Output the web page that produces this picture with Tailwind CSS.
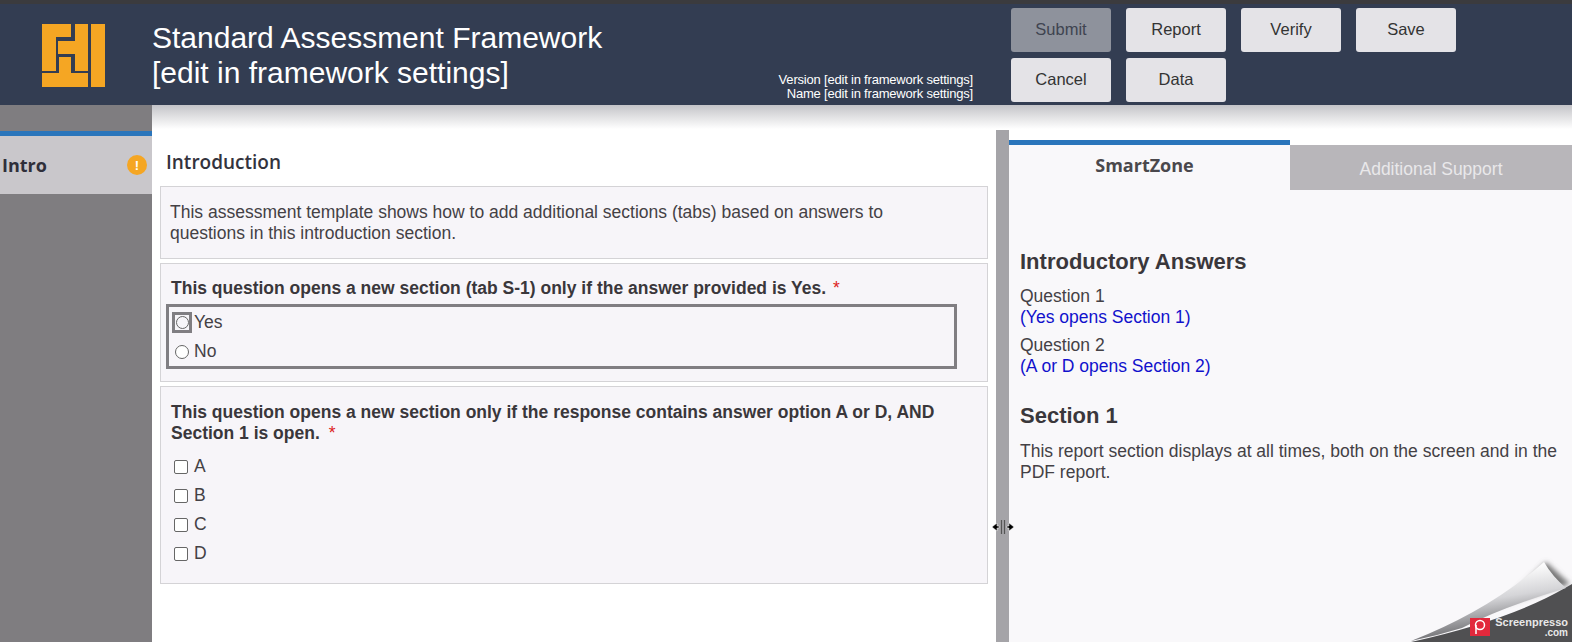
<!DOCTYPE html>
<html lang="en">
  <head>
    <meta charset="UTF-8" />
    <title>Standard Assessment Framework</title>
    <script src="https://cdn.jsdelivr.net/npm/@tailwindcss/browser@4"></script>
  </head>
  <body class="relative w-[1572px] h-[642px] overflow-hidden bg-white font-['Liberation_Sans',Arial,sans-serif] text-[#444145]">
    <!-- header -->
    <header class="flex h-[105px] bg-[#333d52] border-t-4 border-[#3b3b3e]">
      <svg class="ml-[42px] mt-[20px] w-[63px] h-[63px] shrink-0" viewBox="0 0 63 63" fill="#f5a623">
        <path d="M49 0h14v63H49z" />
        <path d="M0 49h46v14H0z" />
        <path d="M17 33h12v16H17z" />
        <path d="M0 0h29v13H14v34H0z" />
        <path d="M33 0h13v47H33V30H16V17h17z" />
      </svg>
      <div class="ml-[47px] mt-[16px] w-[620px] text-[30px] leading-[35px] text-white">
        Standard Assessment Framework<br />[edit in framework settings]
      </div>
      <div class="w-[201px] pt-[69px] text-right text-[13px] leading-[14px] text-white tracking-[-0.2px]">
        <div>Version [edit in framework settings]</div>
        <div>Name [edit in framework settings]</div>
      </div>
      <div class="ml-[38px] mt-[4px] grid grid-cols-[repeat(4,100px)] auto-rows-[44px] gap-x-[15px] gap-y-[6px] text-[16.5px]">
        <button class="rounded-[3px] bg-[#8e929c] pb-[2px] text-[#3f4450]">Submit</button>
        <button class="rounded-[3px] bg-[#e4e3e7] pb-[2px] text-[#333]">Report</button>
        <button class="rounded-[3px] bg-[#e4e3e7] pb-[2px] text-[#333]">Verify</button>
        <button class="rounded-[3px] bg-[#e4e3e7] pb-[2px] text-[#333]">Save</button>
        <button class="rounded-[3px] bg-[#e4e3e7] pb-[2px] text-[#333]">Cancel</button>
        <button class="rounded-[3px] bg-[#e4e3e7] pb-[2px] text-[#333]">Data</button>
      </div>
    </header>

    <div class="flex h-[537px]">
      <!-- left tabs -->
      <aside class="w-[152px] shrink-0 bg-[#7f7d80] pt-[26px]">
        <div class="flex items-center justify-between h-[63px] border-t-[5px] border-[#2a75bb] bg-[#c9c7cb] pl-[2px] pr-[5px]">
          <span class="font-['Open_Sans',sans-serif] font-bold text-[18px] text-[#2f2f3a]">Intro</span>
          <span class="flex items-center justify-center w-[20px] h-[20px] rounded-full bg-[#f5a623] text-white text-[13px] font-bold leading-none">!</span>
        </div>
      </aside>

      <!-- questions -->
      <main class="w-[844px] shrink-0 px-[8px]">
        <h2 class="mt-[45px] ml-[6px] h-[36px] font-['Open_Sans',sans-serif] font-semibold text-[19px] leading-[24px] text-[#33333d]">Introduction</h2>
        <section class="h-[73px] border border-[#d4d3d6] bg-[#f7f5f9] pl-[9px] pt-[15px] text-[17.5px] leading-[21px]">
          This assessment template shows how to add additional sections (tabs) based on answers to<br />questions in this introduction section.
        </section>
        <section class="mt-[4px] h-[119px] border border-[#d4d3d6] bg-[#f7f5f9] pl-[5px] pt-[14px]">
          <p class="pl-[5px] h-[26px] text-[17.5px] leading-[21px] font-bold text-[#3a373b]">This question opens a new section (tab S-1) only if the answer provided is Yes. <span class="ml-[2px] font-normal text-[#d22]">*</span></p>
          <div class="w-[791px] h-[65px] border-[3px] border-[#807e82] pl-[3px] text-[17.5px]">
            <label class="flex items-center h-[29px] mt-[1px]">
              <span class="flex items-center justify-center w-[20px] h-[21px] border-[3px] border-[#807e82] mr-[2px]"><span class="w-[13px] h-[13px] rounded-full border border-[#666] bg-[#f7f5f9]"></span></span>Yes
            </label>
            <label class="flex items-center h-[29px]">
              <span class="flex items-center justify-center w-[20px] mr-[2px]"><span class="w-[14px] h-[14px] rounded-full border border-[#666] bg-white"></span></span>No
            </label>
          </div>
        </section>
        <section class="mt-[4px] h-[198px] border border-[#d4d3d6] bg-[#f7f5f9] pl-[10px] pt-[15px]">
          <p class="h-[50px] text-[17.5px] leading-[21px] font-bold text-[#3a373b]">This question opens a new section only if the response contains answer option A or D, AND<br />Section 1 is open. <span class="ml-[4px] font-normal text-[#d22]">*</span></p>
          <div class="flex flex-col text-[17.5px]">
            <label class="flex items-center h-[29px] pl-[3px]"><span class="w-[14px] h-[14px] rounded-[2px] border border-[#666] bg-white mr-[6px]"></span>A</label>
            <label class="flex items-center h-[29px] pl-[3px]"><span class="w-[14px] h-[14px] rounded-[2px] border border-[#666] bg-white mr-[6px]"></span>B</label>
            <label class="flex items-center h-[29px] pl-[3px]"><span class="w-[14px] h-[14px] rounded-[2px] border border-[#666] bg-white mr-[6px]"></span>C</label>
            <label class="flex items-center h-[29px] pl-[3px]"><span class="w-[14px] h-[14px] rounded-[2px] border border-[#666] bg-white mr-[6px]"></span>D</label>
          </div>
        </section>
      </main>

      <!-- splitter -->
      <div class="w-[13px] shrink-0 mt-[25px] bg-[#a5a4a8]"></div>

      <!-- smartzone -->
      <div class="relative flex-1">
        <div class="flex pt-[35px] h-[85px] text-center">
          <div class="w-[281px] border-t-[5px] border-[#2a75bb] bg-[#f9f8fa] pt-[7px] pr-[10px] font-['Open_Sans',sans-serif] font-bold text-[18px] text-[#4a484c]">SmartZone</div>
          <div class="flex-1 mt-[5px] bg-[#b8b6ba] pt-[11px] text-[17.5px] text-[#e9e8ea]">Additional Support</div>
        </div>
        <div class="h-[452px] bg-[#f9f8fa] pl-[11px] pr-[8px] text-[17.5px] leading-[21px]">
          <h3 class="pt-[59px] text-[22px] leading-[26px] font-bold text-[#3a373b]">Introductory Answers</h3>
          <p class="mt-[11px]">Question 1<br /><span class="text-[#1111cc]">(Yes opens Section 1)</span></p>
          <p class="mt-[7px]">Question 2<br /><span class="text-[#1111cc]">(A or D opens Section 2)</span></p>
          <h3 class="mt-[26px] text-[22px] leading-[26px] font-bold text-[#3a373b]">Section 1</h3>
          <p class="mt-[12px]">This report section displays at all times, both on the screen and in the PDF report.</p>
        </div>
      </div>
    </div>

    <!-- shadow cast by the header -->
    <div class="absolute left-[152px] right-0 top-[105px] h-[24px] bg-gradient-to-b from-[#c4c4c8] to-white/0"></div>

    <!-- resize cursor over the splitter -->
    <svg class="absolute left-[991px] top-[519px] w-[24px] h-[16px]" viewBox="0 0 24 16" fill="none">
      <path d="M1 8l5-4v3h2v2H6v3z M23 8l-5-4v3h-2v2h2v3z" fill="#000" stroke="#fff" stroke-width=".5" />
      <path d="M10.5 1v14M13.5 1v14" stroke="#555" stroke-width="1.2" />
    </svg>

    <!-- page curl watermark -->
    <svg class="absolute right-0 bottom-0 w-[172px] h-[102px]" viewBox="0 0 172 102">
      <defs>
        <linearGradient id="flap" x1="0.55" y1="0.1" x2="0.75" y2="0.75">
          <stop offset="0" stop-color="#ffffff" />
          <stop offset="0.5" stop-color="#d5d5d8" />
          <stop offset="1" stop-color="#7b7b7e" />
        </linearGradient>
        <filter id="blur"><feGaussianBlur stdDeviation="2.5" /></filter>
      </defs>
      <path d="M146 22L170 44 100 66z" fill="#777" filter="url(#blur)" />
      <path d="M11 102Q110 80 165 48L172 44V102z" fill="#505052" />
      <path d="M11 101Q90 70 144 22Q152 36 166 48Q100 68 62 88Q36 96 11 101z" fill="url(#flap)" />
      <rect x="70" y="78" width="20" height="18" fill="#e2293c" />
      <circle cx="80" cy="85" r="4.5" fill="none" stroke="#fff" stroke-width="1.5" />
      <path d="M76 85v9" stroke="#fff" stroke-width="1.5" />
      <text x="168" y="86" text-anchor="end" font-family="Liberation Sans, sans-serif" font-size="11" font-weight="bold" fill="#e8e8e8">Screenpresso</text>
      <text x="168" y="96" text-anchor="end" font-family="Liberation Sans, sans-serif" font-size="10" font-weight="bold" fill="#e8e8e8">.com</text>
    </svg>
  </body>
</html>
